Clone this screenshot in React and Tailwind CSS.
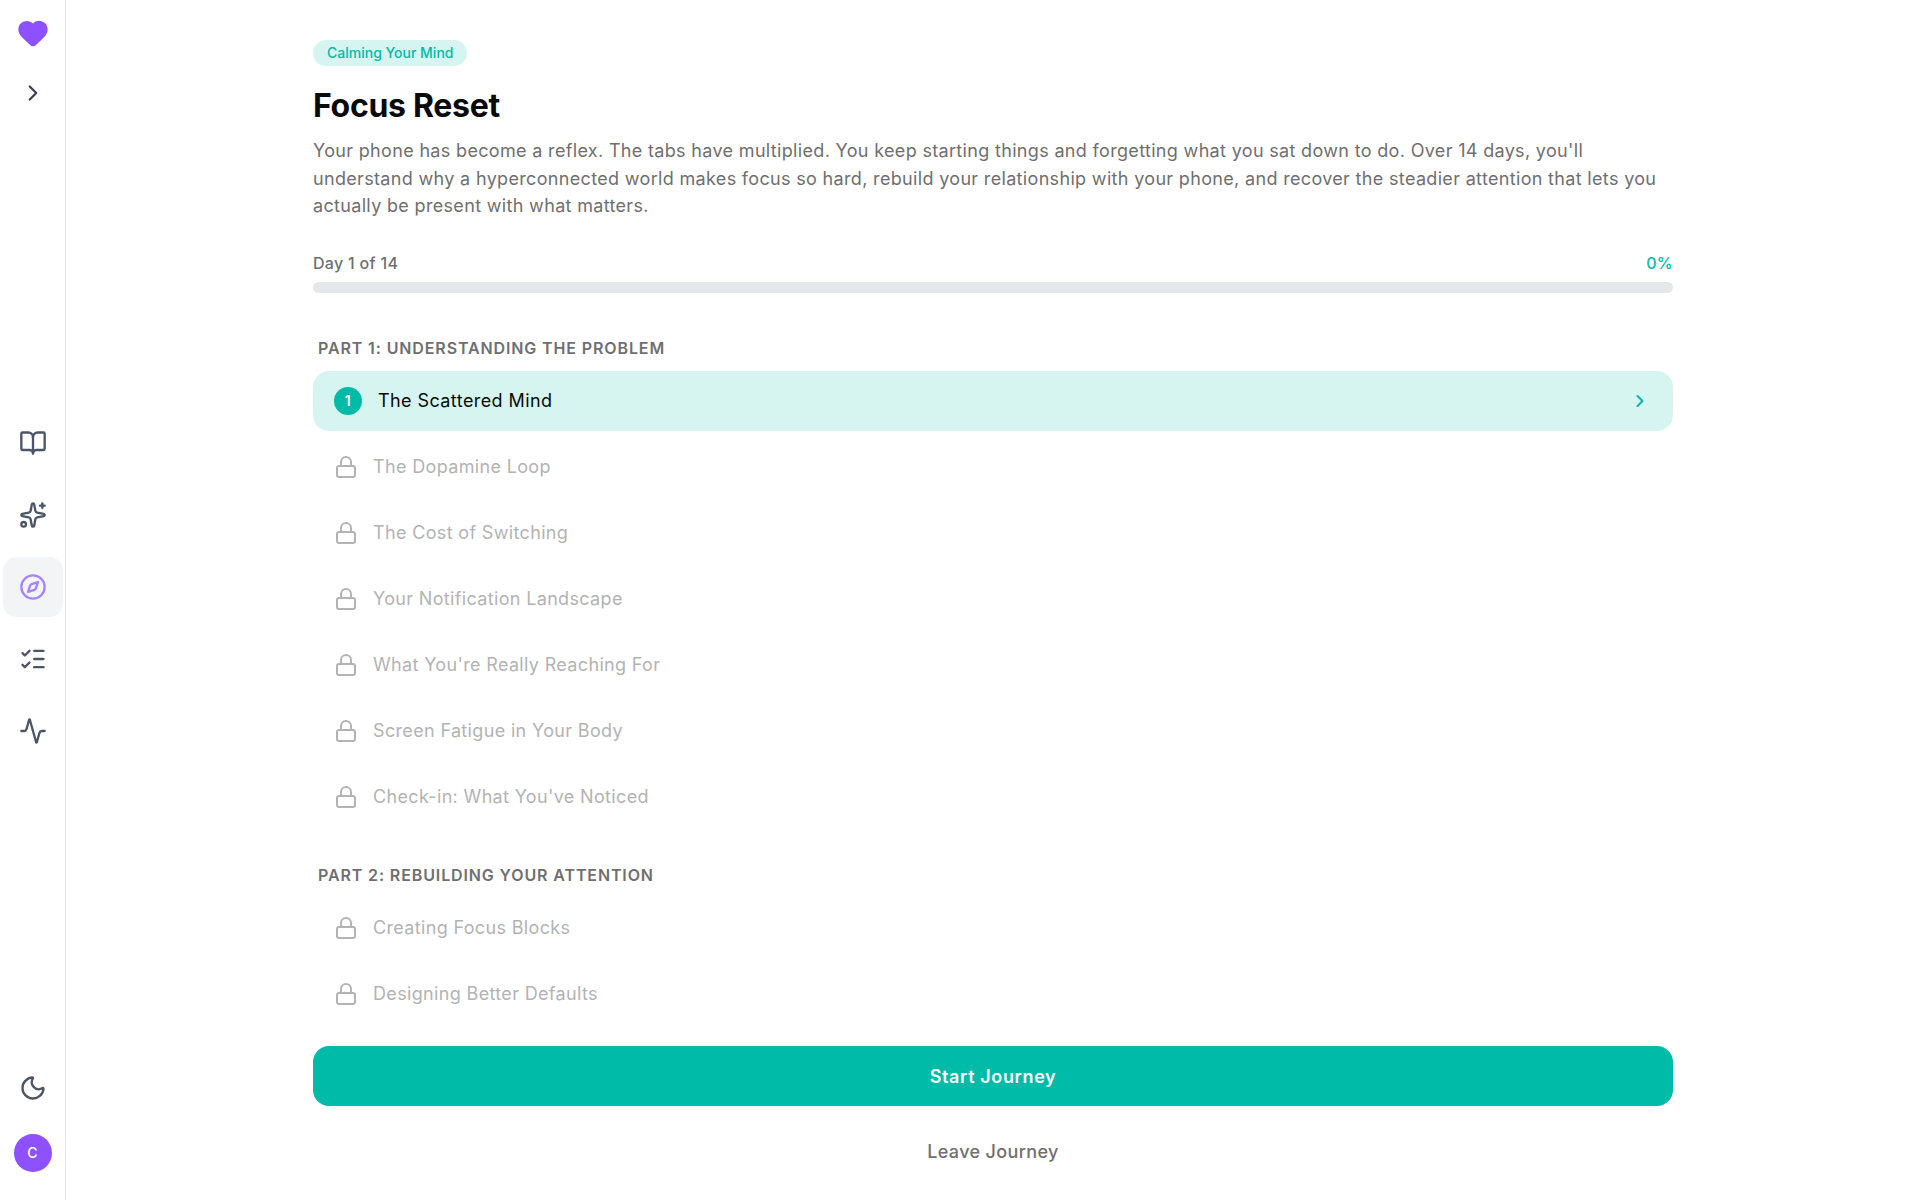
import {
  Activity,
  BookOpen,
  ChevronRight,
  Compass,
  Heart,
  ListChecks,
  Lock,
  Moon,
  Sparkles,
} from "lucide-react";

const navItems = [
  { icon: BookOpen },
  { icon: Sparkles },
  { icon: Compass, active: true },
  { icon: ListChecks },
  { icon: Activity },
];

const partOne = [
  "The Dopamine Loop",
  "The Cost of Switching",
  "Your Notification Landscape",
  "What You're Really Reaching For",
  "Screen Fatigue in Your Body",
  "Check-in: What You've Noticed",
];

const partTwo = ["Creating Focus Blocks", "Designing Better Defaults"];

const Sidebar = () => (
  <aside className="flex h-full w-[66px] shrink-0 flex-col items-center border-r border-[#e5e7eb] pb-[28px] pt-[14px]">
    <button className="flex h-[38px] w-[38px] items-center justify-center">
      <Heart size={32} className="fill-[#8e51ff] text-[#8e51ff]" />
    </button>
    <button className="mt-[22px] flex h-[38px] w-[38px] items-center justify-center">
      <ChevronRight size={26} strokeWidth={2} className="text-[#364153]" />
    </button>
    <nav className="flex flex-1 flex-col items-center justify-center gap-[12px] pb-[13px]">
      {navItems.map(({ icon: Icon, active }, i) => (
        <button
          key={i}
          className={`flex h-[60px] w-[60px] items-center justify-center rounded-[14px] ${
            active ? "bg-[#f3f4f6]" : ""
          }`}
        >
          <Icon
            size={28}
            strokeWidth={2}
            className={active ? "text-[#a684ff]" : "text-[#4a5565]"}
          />
        </button>
      ))}
    </nav>
    <button className="mb-[32px] flex h-[28px] w-[28px] items-center justify-center">
      <Moon size={28} strokeWidth={2} className="text-[#4a5565]" />
    </button>
    <div className="flex h-[38px] w-[38px] items-center justify-center rounded-full bg-[#8e51ff] text-sm font-medium text-white">
      C
    </div>
  </aside>
);

const LockedRow = ({ title }) => (
  <div className="flex h-[60px] items-center gap-[15px] px-[21px] text-[18px] tracking-[0.34px] text-[#b3b3b3]">
    <Lock size={24} strokeWidth={2} className="shrink-0 text-[#b3b3b3]" />
    <span>{title}</span>
  </div>
);

const PartTitle = ({ children }) => (
  <h2 className="mb-[11px] px-[5px] text-[16px] font-semibold uppercase leading-[24px] tracking-[0.88px] text-[#6f6f6f]">
    {children}
  </h2>
);

export default function App() {
  return (
    <div
      className="flex h-screen w-full overflow-hidden bg-white"
      style={{ fontFamily: "Inter, sans-serif" }}
    >
      <Sidebar />
      <main className="flex min-w-0 flex-1 flex-col items-center">
        <div className="flex h-full w-[1360px] flex-col pt-[40px]">
          <span className="self-start rounded-full bg-[#d7f5f0] px-[14px] text-[14px] font-medium leading-[26px] text-[#00bba7]">
            Calming Your Mind
          </span>
          <h1 className="mt-[20px] text-[32px] font-bold leading-[40px] tracking-[-0.3px] text-[#0a0a0a]">
            Focus Reset
          </h1>
          <p className="mt-[11px] text-[18px] leading-[27.5px] tracking-[0.33px] text-[#6f6f6f]">
            Your phone has become a reflex. The tabs have multiplied. You keep
            starting things and forgetting what you sat down to do. Over 14 days,
            you'll understand why a hyperconnected world makes focus so hard,
            rebuild your relationship with your phone, and recover the steadier
            attention that lets you actually be present with what matters.
          </p>

          <div className="mt-[31px] flex items-center justify-between text-[16px] font-medium leading-[24px] tracking-[0.3px]">
            <span className="text-[#6f6f6f]">Day 1 of 14</span>
            <span className="text-[#00bba7]">0%</span>
          </div>
          <div className="mt-[7px] h-[11px] w-full rounded-full bg-[#e5e7eb]" />

          <div className="mt-[43px] flex-1">
            <PartTitle>Part 1: Understanding the problem</PartTitle>
            <div className="flex flex-col gap-[6px]">
              <button className="flex h-[60px] w-full items-center gap-[16px] rounded-[16px] bg-[#d7f5f0] pl-[21px] pr-[23px] text-left text-[18px] tracking-[0.42px] text-[#0a0a0a]">
                <span className="flex h-[28px] w-[28px] shrink-0 items-center justify-center rounded-full bg-[#00bba7] text-[14px] font-semibold text-white">
                  1
                </span>
                <span className="flex-1">The Scattered Mind</span>
                <ChevronRight size={20} strokeWidth={2.5} className="text-[#00bba7]" />
              </button>
              {partOne.map((title) => (
                <LockedRow key={title} title={title} />
              ))}
            </div>

            <div className="mt-[36px]">
              <PartTitle>Part 2: Rebuilding your attention</PartTitle>
              <div className="flex flex-col gap-[6px]">
                {partTwo.map((title) => (
                  <LockedRow key={title} title={title} />
                ))}
              </div>
            </div>
          </div>

          <div className="flex flex-col items-center pb-[30px]">
            <button className="h-[60px] w-full rounded-[16px] bg-[#00bba7] text-[18px] font-semibold tracking-[0.62px] text-white">
              Start Journey
            </button>
            <button className="mt-[26px] h-[38px] text-[18px] font-medium tracking-[0.36px] text-[#6f6f6f]">
              Leave Journey
            </button>
          </div>
        </div>
      </main>
    </div>
  );
}
